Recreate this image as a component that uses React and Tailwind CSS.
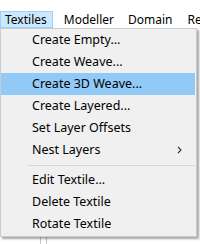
import React from "react";

const font = { fontFamily: '"Noto Sans", "Liberation Sans", sans-serif' };

const MenuItem = ({ label, active, sub }) => (
  <div
    className={`flex items-center h-[22px] pl-[31px] pr-[12px] text-[12.5px] text-black ${
      active ? "bg-[#91c9f7]" : ""
    }`}
  >
    <span className="flex-1 whitespace-nowrap">{label}</span>
    {sub && (
      <svg width="5" height="8" viewBox="0 0 5 8" className="mr-[1px]">
        <path d="M1 1 L4 4 L1 7" fill="none" stroke="#333" strokeWidth="1.1" />
      </svg>
    )}
  </div>
);

export default function App() {
  const top = ["Create Empty...", "Create Weave...", "Create 3D Weave...", "Create Layered...", "Set Layer Offsets"];
  const bottom = ["Edit Textile...", "Delete Textile", "Rotate Textile"];

  return (
    <div className="relative w-[200px] h-[244px] overflow-hidden bg-white" style={font}>
      {/* menu bar */}
      <div className="flex items-center pt-[11px] h-[28px] text-[12px] text-black whitespace-nowrap">
        <div className="h-[17px] flex items-center pl-[4px] pr-[5px] border border-[#99d1ff] bg-[#cce8ff]">Textiles</div>
        <div className="ml-[11px]">Modeller</div>
        <div className="ml-[14px]">Domain</div>
        <div className="ml-[15px]">Re</div>
      </div>

      {/* window behind */}
      <div className="flex h-[216px] pt-[200px]">
        <div className="ml-[40px] w-px bg-[#c8c8c8]" />
        <div className="ml-[5px] w-px bg-[#c8c8c8]" />
      </div>

      {/* dropdown */}
      <div className="absolute left-0 top-[28px] w-[197px] h-[209px] border border-[#cccccc] bg-[#f0f0f0] shadow-[2px_2px_2px_rgba(0,0,0,0.35)] pr-[1px]">
        {top.map((t, i) => (
          <MenuItem key={t} label={t} active={i === 2} />
        ))}
        <MenuItem label="Nest Layers" sub />
        <div className="pt-[4px] pb-[3px] pl-[27px]">
          <div className="h-px bg-[#d7d7d7]" />
        </div>
        {bottom.map((t) => (
          <MenuItem key={t} label={t} />
        ))}
      </div>
    </div>
  );
}
